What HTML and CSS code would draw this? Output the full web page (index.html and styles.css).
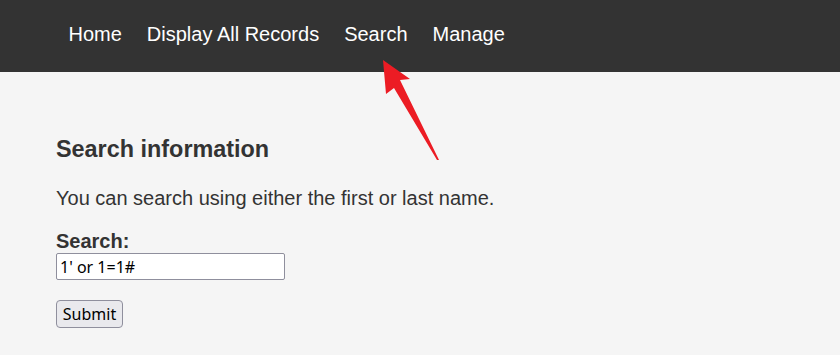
FILE: index.html
```html
<!DOCTYPE html>
<html lang="en">
<head>
    <meta charset="UTF-8">
    <meta name="viewport" content="width=device-width, initial-scale=1.0">
    <title>Search</title>
    <link rel="stylesheet" href="styles.css">
</head>
<body>
    <nav class="topnav">
        <a href="#">Home</a>
        <a href="#">Display All Records</a>
        <a href="#">Search</a>
        <a href="#">Manage</a>
    </nav>

    <div class="content">
        <h2>Search information</h2>
        <p>You can search using either the first or last name.</p>
        <form action="search" method="POST">
            <label for="search">Search:</label>
            <input type="text" id="search" name="search" value="1' or 1=1#">
            <button type="submit" class="btn">Submit</button>
        </form>
    </div>

    <svg class="arrow" width="840" height="355" viewBox="0 0 840 355">
        <polygon points="383,60 410,79 400,80 439,160 437,160 394,88 386,94" fill="#ec1c24"/>
    </svg>
</body>
</html>
```

FILE: styles.css
```css
* {
    margin: 0;
    padding: 0;
    box-sizing: border-box;
}

body {
    background: #f5f5f5;
    color: #333;
    font-family: 'Liberation Sans', Arial, sans-serif;
    height: 355px;
    overflow: hidden;
}

.topnav {
    background: #333;
    height: 72px;
    display: flex;
    align-items: center;
    padding-left: 56px;
    padding-bottom: 4px;
}

.topnav a {
    color: #fff;
    text-decoration: none;
    font-size: 20px;
    padding: 0 12.5px;
}

.content {
    padding: 64px 56px 0;
}

h2 {
    font-size: 23.4px;
    margin-bottom: 24px;
}

p {
    font-size: 20px;
    margin-bottom: 20px;
}

label {
    display: block;
    font-size: 20px;
    font-weight: bold;
}

input {
    display: block;
    width: 229px;
    height: 27px;
    font-family: 'Noto Sans', sans-serif;
    font-size: 16px;
    padding: 0 3px;
    border: 1px solid #8f8f9d;
    border-radius: 2px;
    background: #fff;
    color: #000;
    margin-bottom: 20px;
}

.btn {
    display: block;
    width: 67px;
    height: 28px;
    font-family: 'Noto Sans', sans-serif;
    font-size: 16px;
    border: 1px solid #8f8f9d;
    border-radius: 4px;
    background: #e9e9ed;
    color: #000;
}

.arrow {
    position: absolute;
    top: 0;
    left: 0;
    pointer-events: none;
}
```
